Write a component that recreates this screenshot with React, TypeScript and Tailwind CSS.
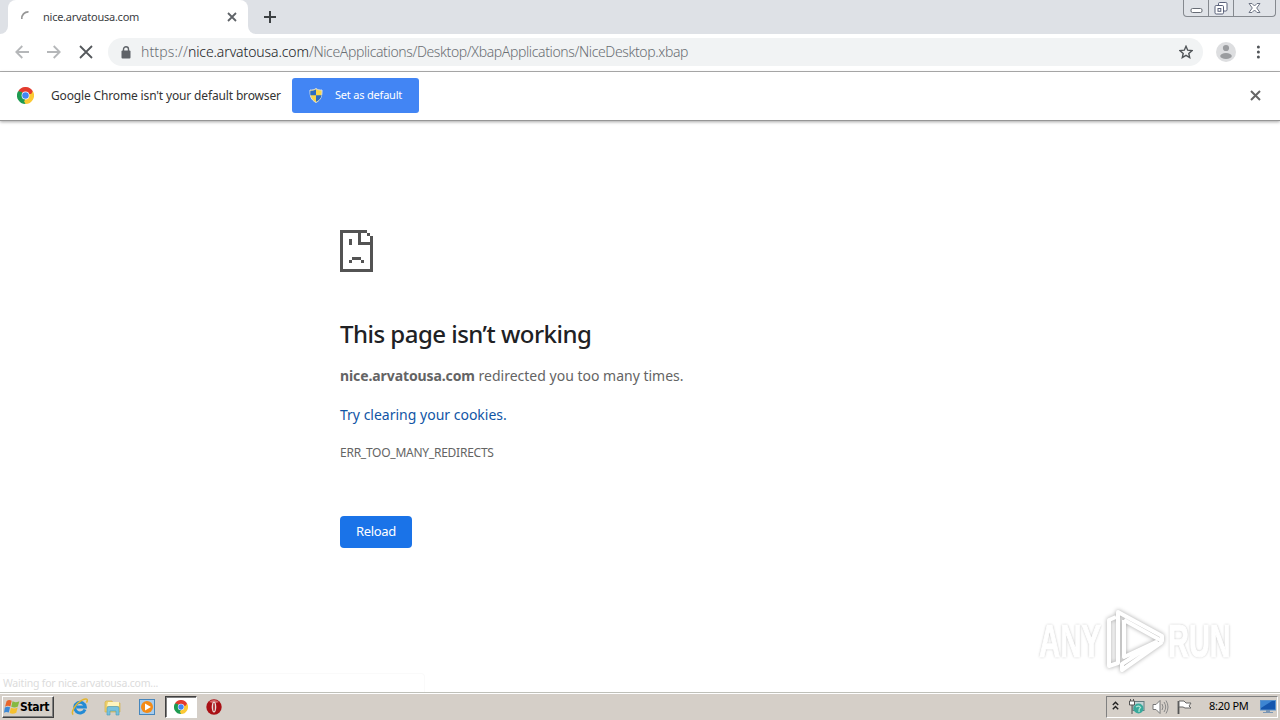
import React from "react";

function ChromeLogo({ size }: { size: number }) {
  return (
    <svg width={size} height={size} viewBox="0 0 48 48" className="shrink-0">
      <path d="M24 24L3.2 12A24 24 0 0 1 44.8 12Z" fill="#e33b2e" />
      <path d="M24 24L44.8 12A24 24 0 0 1 24 48Z" fill="#fcc934" />
      <path d="M24 24L24 48A24 24 0 0 1 3.2 12Z" fill="#1e9b51" />
      <path d="M24 12H44.8L40 20H30Z" fill="#e33b2e" />
      <path d="M34.4 30L24 48L20 40L26 32Z" fill="#fcc934" />
      <path d="M13.6 30L3.2 12L14 14L17 22Z" fill="#1e9b51" />
      <circle cx="24" cy="24" r="11" fill="#fff" />
      <circle cx="24" cy="24" r="9.2" fill="#4285f4" />
    </svg>
  );
}

function Cross({ size, color, width }: { size: number; color: string; width: number }) {
  return (
    <svg width={size} height={size} viewBox={`0 0 ${size} ${size}`} className="shrink-0">
      <path d={`M1 1L${size - 1} ${size - 1}M${size - 1} 1L1 ${size - 1}`} stroke={color} strokeWidth={width} />
    </svg>
  );
}

function TabStrip() {
  return (
    <div className="flex h-[34px] shrink-0 items-start bg-[#dee1e6]">
      <div className="flex h-[34px] w-2 items-end bg-white">
        <div className="h-full w-2 rounded-br-lg bg-[#dee1e6]" />
      </div>
      <div className="h-[34px] w-60 bg-[#dee1e6]">
        <div className="flex h-full items-center rounded-t-lg bg-white pl-[12px] pr-[11px]">
          <svg width="16" height="16" viewBox="0 0 16 16" className="mt-[1px]">
            <path d="M1.8 9A6.5 6.5 0 0 1 8.5 1.8" fill="none" stroke="#969696" strokeWidth="1.7" />
          </svg>
          <span className="ml-[7px] flex-1 whitespace-nowrap text-[11px] tracking-[-0.25px] text-[#3c4043]">nice.arvatousa.com</span>
          <Cross size={10} color="#5f6368" width={1.8} />
        </div>
      </div>
      <div className="h-[34px] w-2 bg-white">
        <div className="h-full w-2 rounded-bl-lg bg-[#dee1e6]" />
      </div>
      <svg width="12" height="12" viewBox="0 0 12 12" className="ml-2 mt-[11px]">
        <path d="M6 0V12M0 6H12" stroke="#3c4043" strokeWidth="2" />
      </svg>
      <div className="ml-auto mr-[4px] flex h-[17px] w-[93px] rounded-b-[4px] border border-t-0 border-[#85898f] bg-[#e0e3e8]">
        <div className="flex w-[25px] justify-center border-r border-[#85898f]">
          <svg width="13" height="16" viewBox="0 0 13 16">
            <rect x="1" y="8.5" width="11" height="4" rx="1.5" fill="#fff" stroke="#676c75" />
          </svg>
        </div>
        <div className="flex w-[25px] justify-center border-r border-[#85898f]">
          <svg width="14" height="16" viewBox="0 0 14 16">
            <rect x="4.5" y="2.5" width="8.5" height="8.5" rx="1.2" fill="#fff" stroke="#596079" />
            <rect x="1" y="5.5" width="8.5" height="8.5" rx="1.2" fill="#fff" stroke="#596079" />
            <rect x="4" y="8.5" width="2.8" height="2.8" fill="#fff" stroke="#596079" />
          </svg>
        </div>
        <div className="flex flex-1 justify-center">
          <svg width="13" height="16" viewBox="0 0 13 16">
            <path d="M1 3.5H4L6.5 6L9 3.5H12L8.7 8L12 12.5H9L6.5 10L4 12.5H1L4.3 8Z" fill="#fff" stroke="#6e7585" />
          </svg>
        </div>
      </div>
    </div>
  );
}

function Toolbar() {
  return (
    <div className="flex h-[38px] shrink-0 items-center border-b border-[#b0b0b0] bg-white pb-[1px]">
      <svg width="14" height="14" viewBox="0 0 14 14" className="ml-[15px]">
        <path d="M14 7H1.5M7.3 1L1.3 7L7.3 13" fill="none" stroke="#b5b7b9" strokeWidth="1.8" />
      </svg>
      <svg width="14" height="14" viewBox="0 0 14 14" className="ml-[18px]">
        <path d="M0 7H12.5M6.7 1L12.7 7L6.7 13" fill="none" stroke="#b5b7b9" strokeWidth="1.8" />
      </svg>
      <div className="ml-[18px] flex">
        <Cross size={14} color="#55585c" width={1.8} />
      </div>
      <div className="ml-[15px] flex h-7 w-[1095px] items-center rounded-full bg-[#f1f3f4] pl-[13px] pr-[10px]">
        <svg width="10" height="13" viewBox="0 0 10 13">
          <rect x="0.5" y="4.5" width="9" height="8" rx="1" fill="#5f6368" />
          <path d="M2.5 5V3.3A2.5 2.5 0 0 1 7.5 3.3V5" fill="none" stroke="#5f6368" strokeWidth="1.4" />
        </svg>
        <div className="-mt-[2px] ml-[10px] flex flex-1 whitespace-nowrap text-[14px] font-light text-[#6a6e73]">
          <span className="tracking-[0.12px]">https://</span>
          <span className="tracking-[-0.1px] text-[#202124]">nice.arvatousa.com</span>
          <span className="tracking-[-0.375px]">/NiceApplications/Desktop/XbapApplications/NiceDesktop.xbap</span>
        </div>
        <svg width="14" height="14" viewBox="0 0 14 14">
          <path d="M7 1.3L8.7 5.2L13 5.6L9.8 8.4L10.7 12.6L7 10.4L3.3 12.6L4.2 8.4L1 5.6L5.3 5.2Z" fill="none" stroke="#505458" strokeWidth="1.4" />
        </svg>
      </div>
      <svg width="20" height="20" viewBox="0 0 20 20" className="ml-[13px]">
        <circle cx="10" cy="10" r="10" fill="#dddee0" />
        <circle cx="10" cy="6" r="3.1" fill="#9a9c9f" />
        <ellipse cx="10" cy="14" rx="5.8" ry="3" fill="#9a9c9f" />
      </svg>
      <svg width="4" height="14" viewBox="0 0 4 14" className="ml-[20px]">
        <circle cx="2.4" cy="2" r="1.5" fill="#505458" />
        <circle cx="2.4" cy="7" r="1.5" fill="#505458" />
        <circle cx="2.4" cy="12" r="1.5" fill="#505458" />
      </svg>
    </div>
  );
}

function InfoBar() {
  return (
    <div className="relative z-10 flex h-[49px] shrink-0 items-center border-b border-[#969696] bg-white pb-[1px] pl-[17px] pr-[19px] shadow-[0_1px_3px_rgba(0,0,0,0.35)]">
      <ChromeLogo size={17} />
      <span className="ml-[17px] w-[241px] whitespace-nowrap text-[12px] tracking-[-0.15px] text-[#333]">Google Chrome isn't your default browser</span>
      <button className="flex h-[35px] w-[127px] items-center rounded-[3px] bg-[#4285f4] pl-[17px] text-white">
        <svg width="14" height="15" viewBox="0 0 14 15">
          <path d="M7 .5C5.5 1.8 3 2.2 1 2C.8 8 2 12 7 14.5C12 12 13.2 8 13 2C11 2.2 8.5 1.8 7 .5Z" fill="#f8d64a" stroke="#d9dfe2" />
          <path d="M7 1.5V7.3H1.4C1.2 6 1.3 4.5 1.4 2.8C3.5 2.9 5.4 2.5 7 1.5Z" fill="#2b6cc2" />
          <path d="M7 7.3H12.6C12.2 10.3 10.3 12.3 7 13.8Z" fill="#2b6cc2" />
        </svg>
        <span className="ml-[12px] whitespace-nowrap text-[11px] tracking-[-0.2px]">Set as default</span>
      </button>
      <div className="ml-auto flex">
        <Cross size={11} color="#666" width={2} />
      </div>
    </div>
  );
}

function SadPage() {
  return (
    <svg width="33" height="42" viewBox="0 0 11 14" shapeRendering="crispEdges" fill="#535353">
      <path d="M0 0H9V1H1V13H10V5H6V1H7V4H10V5H11V14H0Z" />
      <path d="M9 1H10V2H9ZM10 2H11V5H10ZM3 3H4V5H3ZM4 9H7V10H4ZM3 10H4V11H3ZM7 10H8V11H7Z" />
    </svg>
  );
}

function Watermark() {
  return (
    <div className="absolute left-[1039px] top-[606px] flex h-[70px] w-[194px] items-center font-['Liberation_Sans_Narrow','Liberation_Sans',sans-serif] text-[46px] leading-none text-white [text-shadow:0_0_3px_rgba(0,0,0,0.38)] [-webkit-text-stroke:1.2px_white]">
      <span className="w-[67px] origin-left scale-x-[0.64] whitespace-nowrap font-bold">ANY</span>
      <svg width="60" height="68" viewBox="0 0 60 68" className="shrink-0 overflow-visible drop-shadow-[0_0_2px_rgba(0,0,0,0.35)]">
        <g fill="none" stroke="#fff" strokeWidth="4" strokeLinejoin="round">
          <path d="M12 42V5L56 29V34L18 13" />
          <path d="M10 10L3 13V59L12 56V42" />
          <path d="M56 35L16 63V57L50 35L18 50V13" />
        </g>
      </svg>
      <span className="ml-[2px] w-[64px] origin-left scale-x-[0.63] whitespace-nowrap font-bold">RUN</span>
    </div>
  );
}

function ErrorPage() {
  return (
    <main className="flex min-h-0 flex-1 flex-col bg-white">
      <div className="flex flex-1 flex-col items-start pl-[340px] pt-[109px]">
        <SadPage />
        <h1 className="mt-[44px] h-9 whitespace-nowrap text-[24px] font-medium leading-9 tracking-[-0.52px] text-[#202124]">This page isn’t working</h1>
        <p className="mt-[12px] whitespace-nowrap text-[14px] leading-6 text-[#646464]">
          <b className="tracking-[-0.1px]">nice.arvatousa.com</b> redirected you too many times.
        </p>
        <a className="mt-[15px] whitespace-nowrap text-[14px] leading-6 text-[#1155a5]">Try clearing your cookies.</a>
        <div className="mt-[14px] whitespace-nowrap text-[12px] leading-6 tracking-[-0.25px] text-[#646464]">ERR_TOO_MANY_REDIRECTS</div>
        <button className="mt-[51px] h-8 w-[72px] rounded bg-[#1a73e8] text-[13px] tracking-[-0.3px] text-white">Reload</button>
      </div>
      <div className="h-[19px] w-[425px] rounded-tr border-r border-t border-[#fafafa] pl-[3px] text-[10.5px] leading-[18px] tracking-[-0.2px] text-[#dcdcdc]">Waiting for nice.arvatousa.com...</div>
    </main>
  );
}

function Taskbar() {
  return (
    <footer className="flex h-[28px] shrink-0 items-center border-t border-[#bfc0b9] bg-[#d5cfc8] shadow-[inset_0_1px_0_#fff]">
      <button className="ml-[2px] flex h-[22px] w-[52px] items-center border border-b-[#404040] border-l-white border-r-[#404040] border-t-white pl-[1px] text-[12px] font-bold tracking-[-0.5px] text-black shadow-[inset_-1px_-1px_0_#808080]">
        <svg width="16" height="16" viewBox="0 0 15 15" className="shrink-0">
          <path d="M2.4 2Q4.6.2 7.2 1.7L6 7Q3.5 5.7 1 7.2Z" fill="#e8662c" />
          <path d="M8 2.2Q10.6 3.8 14.4 2.1L13 7.1Q10 8.6 6.8 7.3Z" fill="#86b942" />
          <path d="M.8 8Q3.4 6.6 5.7 7.8L4.5 12.6Q2 11.5 0 12.8Z" fill="#3d89d6" />
          <path d="M6.5 8.2Q9.6 9.6 12.8 8L11.5 12.8Q8.4 14.6 5.3 13.2Z" fill="#f5c02f" />
        </svg>
        <span className="font-['DejaVu_Sans_Condensed','DejaVu_Sans',sans-serif] tracking-[-0.35px]">Start</span>
      </button>
      <svg width="18" height="18" viewBox="0 0 18 18" className="ml-[17px]">
        <path d="M14 11.5A5.3 5.3 0 1 1 14.3 9H5.5" fill="none" stroke="#238bd5" strokeWidth="3" />
        <path d="M2.3 16.5C-1 15 5 5.2 11 2.2C15.5-.2 17.5 1 15.5 4.7" fill="none" stroke="#e3b52d" strokeWidth="1.5" />
      </svg>
      <svg width="17" height="17" viewBox="0 0 17 17" className="ml-[15px] mt-[2px]">
        <path d="M1 3V13H16V4H9L8 2H2Z" fill="#edcf69" stroke="#d3b250" strokeWidth=".7" />
        <path d="M4 3H15V7H3Z" fill="#fff5bd" />
        <path d="M3 9Q3 7.5 5 7.5H13Q15 7.5 15 9V16H12V12H6V16H3Z" fill="#77c2dd" stroke="#4b9bba" strokeWidth=".6" />
      </svg>
      <svg width="16" height="16" viewBox="0 0 16 16" className="ml-[18px]">
        <rect x=".5" y=".5" width="15" height="15" fill="#a7cced" stroke="#4686bc" />
        <circle cx="8" cy="8" r="6" fill="#f48b16" />
        <path d="M6 4.5L12 8L6 11.5Z" fill="#fff" />
      </svg>
      <div className="ml-[10px] flex h-[22px] w-[32px] items-center justify-center border border-b-white border-l-[#404040] border-r-white border-t-[#404040] bg-white shadow-[inset_1px_1px_0_#808080]">
        <ChromeLogo size={14} />
      </div>
      <svg width="16" height="16" viewBox="0 0 16 16" className="ml-[9px]">
        <circle cx="8" cy="8" r="7.7" fill="#a91015" />
        <path d="M3 3Q8-1 13 3Q9 5 3 3Z" fill="#d66a69" />
        <ellipse cx="8" cy="8" rx="2.3" ry="5.5" fill="#e9dfda" />
        <ellipse cx="8" cy="8" rx=".8" ry="4.3" fill="#a91015" />
      </svg>
      <div className="ml-auto mr-[2px] flex h-[22px] w-[172px] items-center border border-b-white border-l-[#808080] border-r-white border-t-[#808080] pl-[5px]">
        <svg width="7" height="10" viewBox="0 0 7 10" className="-mt-[2px]">
          <path d="M.8 4L3.5 1.3L6.2 4M.8 8.3L3.5 5.6L6.2 8.3" fill="none" stroke="#222" strokeWidth="1.4" />
        </svg>
        <svg width="17" height="17" viewBox="0 0 17 17" className="ml-[9px]">
          <rect x="5" y="3.5" width="11" height="9" fill="#c3d4d5" stroke="#657c80" />
          <circle cx="10.5" cy="10.5" r="5" fill="#38a99b" />
          <path d="M8 9Q11 7 12.5 9.5Q10.5 11 11 14" fill="none" stroke="#b2e6d5" strokeWidth="1.3" />
          <path d="M1.5 3H6.5V7H1.5ZM2.5 1V3M5.5 1V3M4 7V16" fill="#fff" stroke="#555" />
        </svg>
        <svg width="17" height="16" viewBox="0 0 17 16" className="ml-[7px]">
          <path d="M1 5.5H4L8 1.5V14.5L4 10.5H1Z" fill="#fff" stroke="#777" />
          <path d="M10 5Q12 8 10 11M12 3Q15.4 8 12 13M14 1.5Q18 8 14 14.5" fill="none" stroke="#888" />
        </svg>
        <svg width="17" height="16" viewBox="0 0 17 16" className="ml-[7px]">
          <path d="M2.5 2V15" stroke="#555" strokeWidth="1.8" />
          <path d="M3 2H8L10 4H15L13 7L15 9H9L7 8H3Z" fill="#fff" stroke="#666" />
        </svg>
        <span className="ml-[16px] w-[40px] whitespace-nowrap text-[11px] tracking-[-0.25px] text-black">8:20 PM</span>
        <svg width="16" height="15" viewBox="0 0 16 15" className="ml-[11px]">
          <rect x=".5" y="1.5" width="15" height="9.5" fill="#1556ae" stroke="#5891cd" />
          <path d="M1 2H12L1 9Z" fill="#3d85d2" />
          <path d="M6 11H10V13H13V14H3V13H6Z" fill="#7b97b5" />
        </svg>
      </div>
    </footer>
  );
}

export default function App() {
  return (
    <div className="relative flex h-[720px] w-[1280px] flex-col overflow-hidden bg-white font-['Noto_Sans','Open_Sans',sans-serif]">
      <TabStrip />
      <Toolbar />
      <InfoBar />
      <ErrorPage />
      <Taskbar />
      <Watermark />
    </div>
  );
}
